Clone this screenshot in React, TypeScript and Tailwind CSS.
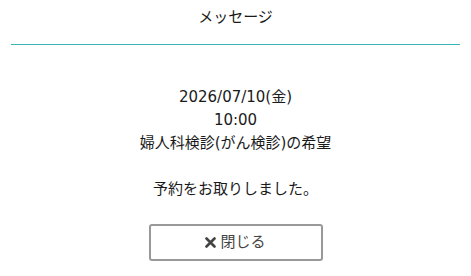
import React from 'react'

const App: React.FC = () => {
  return (
    <div
      className="w-[471px] h-[276px] bg-white text-[#1a1a1a] overflow-hidden"
      style={{ fontFamily: '"DejaVu Sans", "Noto Sans CJK JP", sans-serif' }}
    >
      <div className="mx-[11px] h-[45px] border-b border-[#3ab3b6] flex items-start justify-center pt-[5px]">
        <h1 className="text-[15px] leading-[24px] font-normal">メッセージ</h1>
      </div>
      <div className="pt-[41px] text-center text-[15px] leading-[23px]">
        <p>2026/07/10(金)</p>
        <p>10:00</p>
        <p>婦人科検診(がん検診)の希望</p>
        <p>&nbsp;</p>
        <p>予約をお取りしました。</p>
      </div>
      <div className="flex justify-center mt-[23px]">
        <button className="w-[174px] h-[37px] border-2 border-[#999] rounded-[3px] bg-white flex items-center justify-center gap-[4px] text-[15px] text-[#444]">
          <svg width="11" height="11" viewBox="0 0 11 11" className="text-[#444]">
            <path d="M1.5 1.5 L9.5 9.5 M9.5 1.5 L1.5 9.5" stroke="currentColor" strokeWidth="2.6" strokeLinecap="round" />
          </svg>
          <span>閉じる</span>
        </button>
      </div>
    </div>
  )
}

export default App
